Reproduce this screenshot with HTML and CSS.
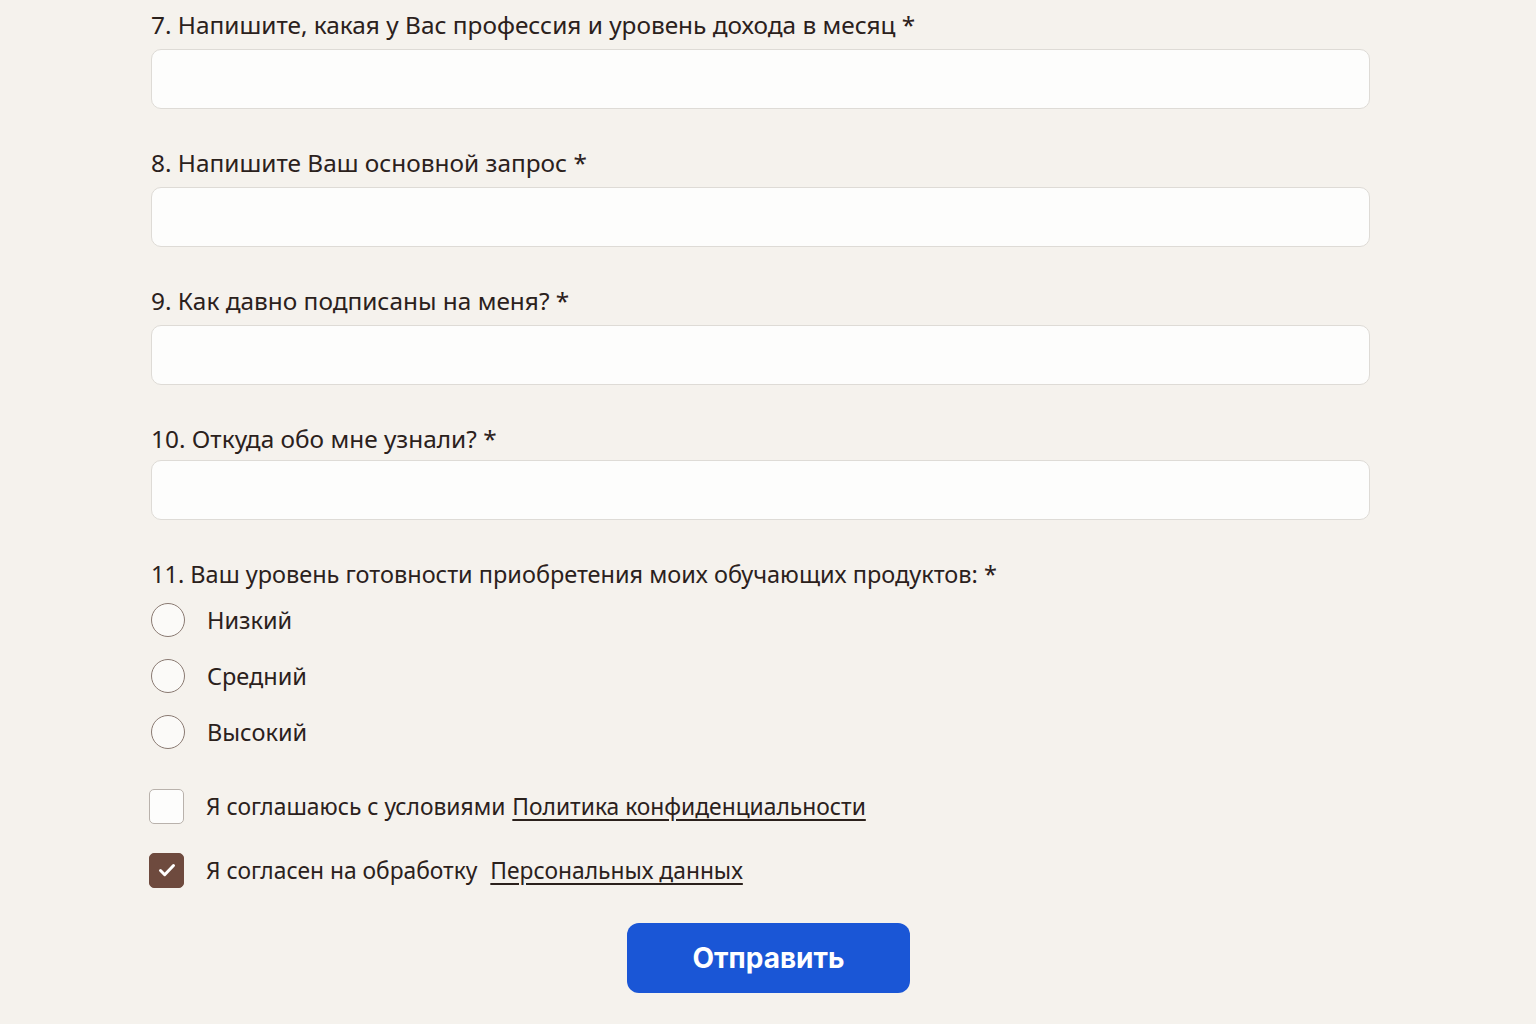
FILE: index.html
```html
<!DOCTYPE html>
<html lang="ru">
<head>
    <meta charset="utf-8">
    <title>Анкета</title>
    <link rel="stylesheet" href="styles.css">
</head>
<body>
<form class="form_box">
    <div class="field">
        <label class="field_label">7. Напишите, какая у Вас профессия и уровень дохода в месяц *</label>
        <input class="field_input" type="text">
    </div>
    <div class="field">
        <label class="field_label">8. Напишите Ваш основной запрос *</label>
        <input class="field_input" type="text">
    </div>
    <div class="field">
        <label class="field_label">9. Как давно подписаны на меня? *</label>
        <input class="field_input" type="text">
    </div>
    <div class="field field_last">
        <label class="field_label">10. Откуда обо мне узнали? *</label>
        <input class="field_input" type="text">
    </div>
    <div class="field field_radio">
        <div class="field_label">11. Ваш уровень готовности приобретения моих обучающих продуктов: *</div>
        <label class="radio_row"><span class="radio"></span>Низкий</label>
        <label class="radio_row"><span class="radio"></span>Средний</label>
        <label class="radio_row"><span class="radio"></span>Высокий</label>
    </div>
    <div class="agree_list">
        <label class="agree_row"><span class="check"></span>Я соглашаюсь с условиями <a href="#">Политика конфиденциальности</a></label>
        <label class="agree_row"><span class="check check_on"><svg width="24" height="24" viewBox="0 0 24 24"><path d="M5.5 12.5l4.2 4.2L18.5 7.5" fill="none" stroke="#fff" stroke-width="3" stroke-linecap="round" stroke-linejoin="round"/></svg></span>Я согласен на обработку&nbsp; <a href="#">Персональных данных</a></label>
    </div>
    <div class="btn_box">
        <button class="btn_send" type="button">Отправить</button>
    </div>
</form>
</body>
</html>
```

FILE: styles.css
```css
body{
    margin:0;
    background:#f5f2ed;
    color:#2b211c;
    font-family:"Noto Sans","Liberation Sans",sans-serif;
}
.form_box{
    width:1220px;
    margin:0 0 0 150px;
    padding-top:10px;
    display:flex;
    flex-direction:column;
}
.field{
    display:flex;
    flex-direction:column;
    margin-bottom:39px;
}
.field_label{
    font-size:24.4px;
    line-height:30px;
    height:30px;
    margin:0 0 9px 1px;
}
.field_last .field_label{
    margin-bottom:6px;
}
.field_input{
    height:60px;
    box-sizing:border-box;
    margin-left:1px;
    background:#fdfdfc;
    border:1.5px solid #dedbd6;
    border-radius:10px;
    outline:none;
}
.field_radio{
    margin-bottom:14px;
}
.field_radio .field_label{
    font-size:23.5px;
    margin-bottom:3px;
}
.radio_row{
    display:flex;
    align-items:center;
    height:56px;
    font-size:23.5px;
}
.radio{
    width:32px;
    height:32px;
    border:1.6px solid #8a7a72;
    border-radius:50%;
    background:#fbfaf8;
    margin:0 22px 0 1px;
}
.agree_list{
    display:flex;
    flex-direction:column;
}
.agree_row{
    display:flex;
    align-items:center;
    height:64px;
    font-size:22.8px;
}
.agree_row a{
    color:#2b211c;
    text-decoration:underline;
    text-underline-offset:4px;
    margin-left:7px;
}
.check{
    width:35px;
    height:35px;
    box-sizing:border-box;
    border:1.6px solid #b9b2ac;
    border-radius:5px;
    background:#fdfdfc;
    margin:0 22px 0 -1px;
    display:flex;
    align-items:center;
    justify-content:center;
}
.check_on{
    background:#6e4a3e;
    border-color:#6e4a3e;
}
.btn_box{
    display:flex;
    justify-content:center;
    margin-top:21px;
}
.btn_send{
    width:283px;
    height:70px;
    background:#1a56d6;
    color:#fff;
    border:none;
    border-radius:12px;
    font-family:"Inter","Noto Sans",sans-serif;
    font-size:28px;
    font-weight:700;
    margin-left:17px;
}
```
